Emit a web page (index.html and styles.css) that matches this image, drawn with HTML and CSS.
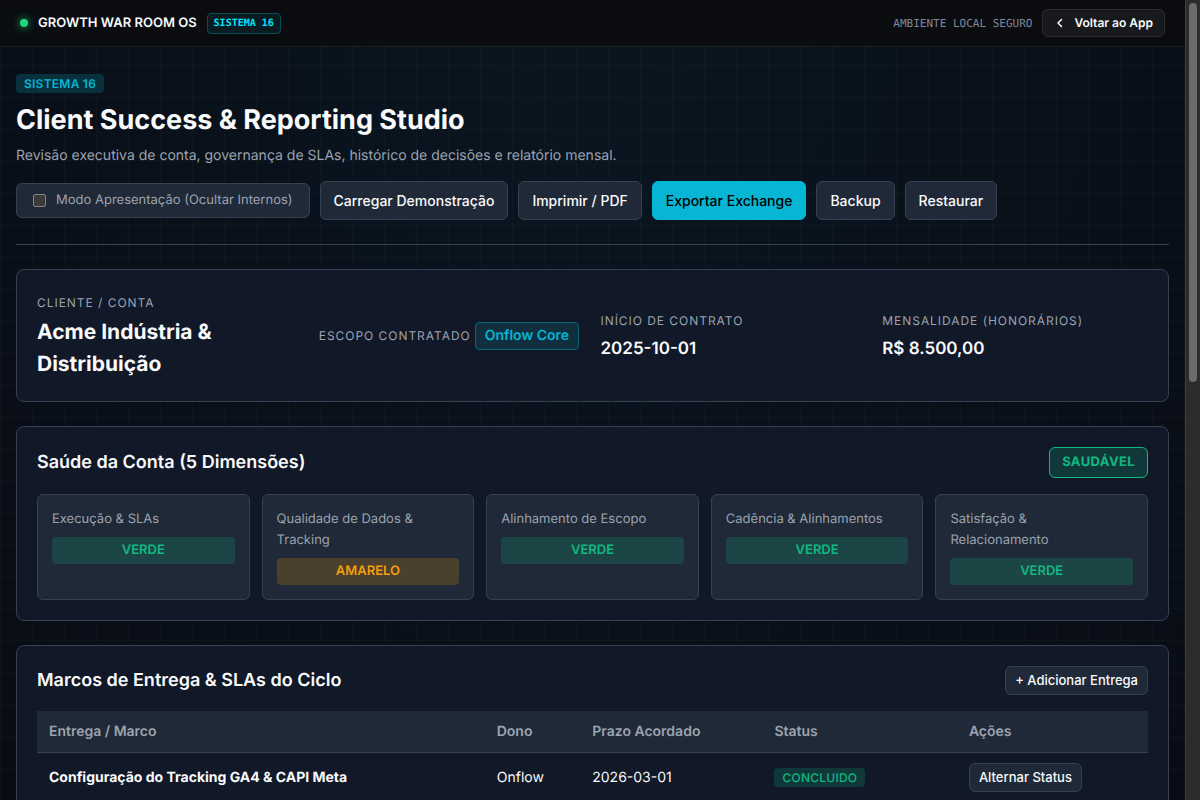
FILE: index.html
```html
<!DOCTYPE html>
<html lang="pt-BR">
<head>
<meta charset="utf-8">
<meta name="viewport" content="width=device-width, initial-scale=1">
<title>Client Success &amp; Reporting Studio</title>
<link rel="stylesheet" href="styles.css">
</head>
<body>
<div class="viewport">
  <header class="topbar">
    <div class="brand">
      <span class="dot"></span>
      <span class="brand-name">GROWTH WAR ROOM OS</span>
      <span class="system-tag">SISTEMA 16</span>
    </div>
    <div class="topbar-side">
      <span class="env">AMBIENTE LOCAL SEGURO</span>
      <a class="back" href="#">
        <svg width="12" height="12" viewBox="0 0 24 24" fill="none" stroke="currentColor" stroke-width="3" stroke-linecap="round" stroke-linejoin="round" aria-hidden="true"><path d="M15 19l-7-7 7-7"/></svg>
        Voltar ao App
      </a>
    </div>
  </header>

  <main class="page">
    <section class="intro">
      <span class="eyebrow">SISTEMA 16</span>
      <h1>Client Success &amp; Reporting Studio</h1>
      <p class="subtitle">Revisão executiva de conta, governança de SLAs, histórico de decisões e relatório mensal.</p>
      <div class="actions">
        <label class="toggle" for="mode"><input type="checkbox" id="mode"> Modo Apresentação (Ocultar Internos)</label>
        <button class="btn" type="button">Carregar Demonstração</button>
        <button class="btn" type="button">Imprimir / PDF</button>
        <button class="btn btn-primary" type="button">Exportar Exchange</button>
        <button class="btn" type="button">Backup</button>
        <button class="btn" type="button">Restaurar</button>
      </div>
    </section>

    <section class="card account">
      <div>
        <span class="label">Cliente / Conta</span>
        <h2 class="client">Acme Indústria &amp; Distribuição</h2>
      </div>
      <div>
        <span class="label label-inline">Escopo Contratado</span>
        <span class="scope">Onflow Core</span>
      </div>
      <div>
        <span class="label">Início de Contrato</span>
        <div class="value">2025-10-01</div>
      </div>
      <div>
        <span class="label">Mensalidade (Honorários)</span>
        <div class="value">R$ 8.500,00</div>
      </div>
    </section>

    <section class="card">
      <div class="card-head">
        <h2>Saúde da Conta (5 Dimensões)</h2>
        <span class="health">SAUDÁVEL</span>
      </div>
      <div class="tiles">
        <div class="tile"><div class="tile-name">Execução &amp; SLAs</div><div class="level">VERDE</div></div>
        <div class="tile"><div class="tile-name">Qualidade de Dados &amp; Tracking</div><div class="level level-warn">AMARELO</div></div>
        <div class="tile"><div class="tile-name">Alinhamento de Escopo</div><div class="level">VERDE</div></div>
        <div class="tile"><div class="tile-name">Cadência &amp; Alinhamentos</div><div class="level">VERDE</div></div>
        <div class="tile"><div class="tile-name">Satisfação &amp;<br>Relacionamento</div><div class="level">VERDE</div></div>
      </div>
    </section>

    <section class="card">
      <div class="card-head">
        <h2>Marcos de Entrega &amp; SLAs do Ciclo</h2>
        <button class="btn btn-small" type="button">+ Adicionar Entrega</button>
      </div>
      <table class="table">
        <thead>
          <tr><th class="col-name">Entrega / Marco</th><th class="col-owner">Dono</th><th class="col-due">Prazo Acordado</th><th class="col-status">Status</th><th>Ações</th></tr>
        </thead>
        <tbody>
          <tr>
            <td><strong>Configuração do Tracking GA4 &amp; CAPI Meta</strong></td>
            <td>Onflow</td>
            <td>2026-03-01</td>
            <td><span class="status">CONCLUIDO</span></td>
            <td><button class="btn btn-small" type="button">Alternar Status</button></td>
          </tr>
        </tbody>
      </table>
    </section>
  </main>
</div>
<div class="scrollbar" aria-hidden="true"><div class="thumb"></div></div>
</body>
</html>
```
FILE: styles.css
```css
* {
  box-sizing: border-box;
}

body {
  margin: 0;
  height: 100vh;
  display: flex;
  overflow: hidden;
  background: #080b13;
  color: #f9fafb;
  font-family: Inter, "Liberation Sans", sans-serif;
  font-size: 14px;
  line-height: 22px;
  text-rendering: geometricPrecision;
}

h1,
h2,
p {
  margin: 0;
}

.viewport {
  flex: 1;
  min-width: 0;
  overflow-y: auto;
  scrollbar-width: none;
  background-color: #090c15;
  background-image:
    linear-gradient(to right, rgba(255, 255, 255, 0.02) 1px, transparent 1px),
    linear-gradient(to bottom, rgba(255, 255, 255, 0.02) 1px, transparent 1px),
    radial-gradient(ellipse at 50% 0, rgba(6, 182, 212, 0.06), transparent 100%);
  background-size: 32px 32px, 32px 32px, 100% 100%;
}

.scrollbar {
  flex: none;
  width: 15px;
  padding: 3px 3px 0 3px;
  background: #2c2c2c;
  border-left: 1px solid #3d3d3d;
}

.thumb {
  width: 8px;
  height: 47.5%;
  border-radius: 4px;
  background: #6b6b6b;
}

/* Top bar */

.topbar {
  display: flex;
  align-items: center;
  justify-content: space-between;
  padding: 9px 20px;
  background: #0a0c10;
  border-bottom: 1px solid #1d2023;
}

.brand,
.topbar-side {
  display: flex;
  align-items: center;
  gap: 10px;
}

.dot {
  width: 8px;
  height: 8px;
  border-radius: 50%;
  background: #22d67b;
  box-shadow: 0 0 8px #22c55e;
}

.brand-name {
  font-size: 13px;
  font-weight: 600;
}

.system-tag,
.env {
  font-family: "DejaVu Sans Mono", monospace;
  font-size: 10px;
  line-height: 19px;
}

.system-tag {
  padding: 0 6px;
  border: 1px solid #0a4c56;
  border-radius: 4px;
  background: #0a1c21;
  color: #00e5ff;
  font-weight: 700;
}

.env {
  color: #7d8899;
  font-size: 11px;
}

.back {
  display: flex;
  align-items: center;
  gap: 8px;
  height: 28px;
  padding: 0 11px;
  border: 1px solid #2a2c30;
  border-radius: 6px;
  background: #17191c;
  color: #f9fafb;
  font-size: 12px;
  font-weight: 600;
  text-decoration: none;
}

/* Page */

.page {
  display: flex;
  flex-direction: column;
  gap: 24px;
  padding: 24px 16px;
}

.intro {
  padding-bottom: 24px;
  border-bottom: 1px solid #374151;
}

.eyebrow {
  display: inline-block;
  padding: 0 8px;
  margin-top: 3px;
  border-radius: 4px;
  background: #08313d;
  color: #06b6d4;
  font-size: 12px;
  font-weight: 600;
  line-height: 19px;
  letter-spacing: 0.02em;
}

h1 {
  margin-top: 3px;
  font-size: 27px;
  font-weight: 700;
  line-height: 43px;
}

.subtitle {
  margin-top: 4px;
  color: #9ca3af;
}

.actions {
  display: flex;
  flex-wrap: wrap;
  align-items: center;
  gap: 10px;
  margin-top: 14px;
}

.btn,
.toggle {
  border: 1px solid #374151;
  border-radius: 6px;
  background: #1f2937;
}

.btn {
  padding: 8px 13px;
  color: #f9fafb;
  font-family: inherit;
  font-size: 14px;
  font-weight: 500;
  line-height: 21px;
}

.btn-primary {
  border-color: #06b6d4;
  background: #06b6d4;
  color: #000;
}

.btn-small {
  padding: 4px 9px;
  font-size: 13px;
  line-height: 19px;
}

.toggle {
  display: flex;
  align-items: center;
  gap: 10px;
  padding: 6px 16px;
  color: #9ca3af;
  font-size: 13px;
  line-height: 21px;
}

.toggle input {
  appearance: none;
  width: 13px;
  height: 13px;
  margin: 0;
  border: 1px solid #858585;
  border-radius: 2px;
  background: #3b3b3b;
}

.toggle input:checked {
  background: #06b6d4;
}

/* Cards */

.card {
  padding: 20px;
  border: 1px solid #374151;
  border-radius: 8px;
  background: #111827;
}

.account {
  display: grid;
  grid-template-columns: repeat(4, 1fr);
  gap: 16px;
  align-items: center;
}

.label {
  display: block;
  color: #9ca3af;
  font-size: 12px;
  line-height: 25px;
  letter-spacing: 0.08em;
  text-transform: uppercase;
}

.label-inline {
  display: inline;
}

.client {
  margin-top: 2px;
  font-size: 21px;
  font-weight: 700;
  line-height: 32px;
}

.value {
  margin-top: 2px;
  font-size: 17px;
  font-weight: 600;
  line-height: 28px;
}

.scope {
  display: inline-block;
  padding: 2px 9px;
  border: 1px solid #0b6478;
  border-radius: 4px;
  background: #10303f;
  color: #06b6d4;
  font-weight: 600;
}

.card-head {
  display: flex;
  align-items: center;
  justify-content: space-between;
  margin-bottom: 16px;
}

.card-head h2 {
  font-size: 18px;
  font-weight: 600;
}

.health {
  padding: 4px 12px;
  border: 1px solid #10b981;
  border-radius: 6px;
  background: #113839;
  color: #10b981;
  font-size: 13px;
  font-weight: 700;
  line-height: 21px;
  letter-spacing: 0.03em;
}

.tiles {
  display: grid;
  grid-template-columns: repeat(5, 1fr);
  gap: 12px;
}

.tile {
  padding: 14px;
  border: 1px solid #374151;
  border-radius: 6px;
  background: #1f2937;
}

.tile-name {
  margin-bottom: 7px;
  color: #9ca3af;
  font-size: 13px;
  line-height: 21px;
}

.level {
  padding: 3px 0;
  border-radius: 4px;
  background: #1c4546;
  color: #10b981;
  font-size: 13px;
  font-weight: 600;
  line-height: 21px;
  text-align: center;
}

.level-warn {
  background: #49402e;
  color: #f59e0b;
}

/* Table */

.table {
  width: 100%;
  table-layout: fixed;
  border-collapse: separate;
  border-spacing: 0;
}

.table th,
.table td {
  padding: 10px 12px;
  border-bottom: 1px solid #374151;
  text-align: left;
}

.table th {
  background: #1f2937;
  color: #9ca3af;
  font-weight: 600;
  line-height: 21px;
}

.table td strong {
  font-weight: 700;
}

.col-name {
  width: 40.3%;
}

.col-owner {
  width: 8.6%;
}

.col-due {
  width: 16.4%;
}

.col-status {
  width: 17.5%;
}

.status {
  display: inline-block;
  padding: 0 8px;
  border-radius: 4px;
  background: #113839;
  color: #10b981;
  font-size: 12px;
  font-weight: 500;
  line-height: 19px;
  letter-spacing: 0.02em;
}
```
